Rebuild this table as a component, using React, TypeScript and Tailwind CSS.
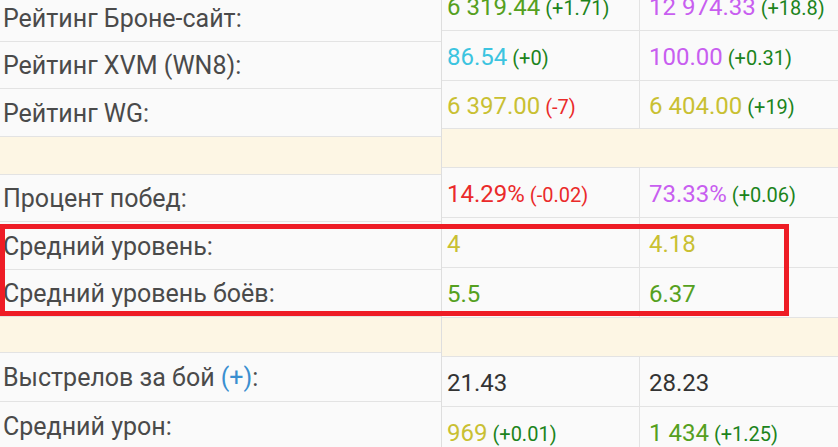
import React from "react";

type Part = { t: string; c: string; small?: boolean };
type Row = { h: string; cream?: boolean; a?: Part[]; b?: Part[] };

const GREEN = "text-[#55a020]";
const DGREEN = "text-[#1c841c]";
const CYAN = "text-[#3cc4e0]";
const PURPLE = "text-[#c85ef0]";
const OLIVE = "text-[#c9c032]";
const RED = "text-[#ea2a2a]";
const DARK = "text-[#333333]";

const leftRows: { h: string; cream?: boolean; label?: React.ReactNode }[] = [
  { h: "h-[48px]", label: "Рейтинг Броне-сайт:" },
  { h: "h-[47px]", label: "Рейтинг XVM (WN8):" },
  { h: "h-[48px]", label: "Рейтинг WG:" },
  { h: "h-[38px]", cream: true },
  { h: "h-[47px]", label: "Процент побед:" },
  { h: "h-[48px]", label: "Средний уровень:" },
  { h: "h-[47px]", label: "Средний уровень боёв:" },
  { h: "h-[36px]", cream: true },
  {
    h: "h-[49px]",
    label: (
      <>
        Выстрелов за бой <span className="text-[#3a8fd0]">(+)</span>:
      </>
    ),
  },
  { h: "h-[49px]", label: "Средний урон:" },
];

const rightRows: Row[] = [
  { h: "h-[50px]", a: [{ t: "6 319.44", c: GREEN }, { t: "(+1.71)", c: DGREEN, small: true }], b: [{ t: "12 974.33", c: PURPLE }, { t: "(+18.8)", c: DGREEN, small: true }] },
  { h: "h-[50px]", a: [{ t: "86.54", c: CYAN }, { t: "(+0)", c: DGREEN, small: true }], b: [{ t: "100.00", c: PURPLE }, { t: "(+0.31)", c: DGREEN, small: true }] },
  { h: "h-[48px]", a: [{ t: "6 397.00", c: OLIVE }, { t: "(-7)", c: RED, small: true }], b: [{ t: "6 404.00", c: OLIVE }, { t: "(+19)", c: DGREEN, small: true }] },
  { h: "h-[39px]", cream: true },
  { h: "h-[50px]", a: [{ t: "14.29%", c: RED }, { t: "(-0.02)", c: RED, small: true }], b: [{ t: "73.33%", c: PURPLE }, { t: "(+0.06)", c: DGREEN, small: true }] },
  { h: "h-[50px]", a: [{ t: "4", c: OLIVE }], b: [{ t: "4.18", c: OLIVE }] },
  { h: "h-[50px]", a: [{ t: "5.5", c: GREEN }], b: [{ t: "6.37", c: GREEN }] },
  { h: "h-[39px]", cream: true },
  { h: "h-[50px]", a: [{ t: "21.43", c: DARK }], b: [{ t: "28.23", c: DARK }] },
  { h: "h-[50px]", a: [{ t: "969", c: OLIVE }, { t: "(+0.01)", c: DGREEN, small: true }], b: [{ t: "1 434", c: GREEN }, { t: "(+1.25)", c: DGREEN, small: true }] },
];

function Value({ parts }: { parts?: Part[] }) {
  if (!parts) return null;
  return (
    <span className="whitespace-nowrap">
      {parts.map((p, i) => (
        <span key={i} className={`${p.c} ${p.small ? "text-[20px]" : "text-[24px]"}`}>
          {i > 0 ? " " : ""}
          {p.t}
        </span>
      ))}
    </span>
  );
}

export default function App() {
  return (
    <div
      className="relative w-[838px] h-[447px] overflow-hidden bg-[#fafafa] flex"
      style={{ fontFamily: "Roboto, 'Noto Sans', sans-serif" }}
    >
      {/* закреплённая колонка с подписями */}
      <div className="w-[442px] shrink-0 border-r border-[#dedede] -mt-[6px]">
        {leftRows.map((r, i) => (
          <div
            key={i}
            className={`${r.h} flex items-center pl-[3px] pt-[2px] border-b border-[#e3e3e3] text-[25px] text-[#4a4a4a] whitespace-nowrap ${
              r.cream ? "bg-[#fdf6e4]" : "bg-[#fafafa]"
            }`}
          >
            <span>{r.label}</span>
          </div>
        ))}
      </div>

      {/* значения */}
      <div className="flex-1 min-w-0 -mt-[19px]">
        {rightRows.map((r, i) => (
          <div
            key={i}
            className={`${r.h} grid grid-cols-[198px_1fr] border-b border-[#e3e3e3] leading-none ${
              r.cream ? "bg-[#fdf6e4]" : "bg-[#fafafa]"
            }`}
          >
            <div className={`flex items-center pl-[5px] pt-[3px] ${r.cream ? "" : "border-r border-[#e3e3e3]"}`}>
              <Value parts={r.a} />
            </div>
            <div className="flex items-center pl-[9px] pt-[3px] overflow-hidden">
              <Value parts={r.b} />
            </div>
          </div>
        ))}
      </div>

      {/* красная рамка-выделение */}
      <div className="absolute left-0 top-[224px] w-[789px] h-[92px] border-[5px] border-[#ee1c25] pointer-events-none" />
    </div>
  );
}
